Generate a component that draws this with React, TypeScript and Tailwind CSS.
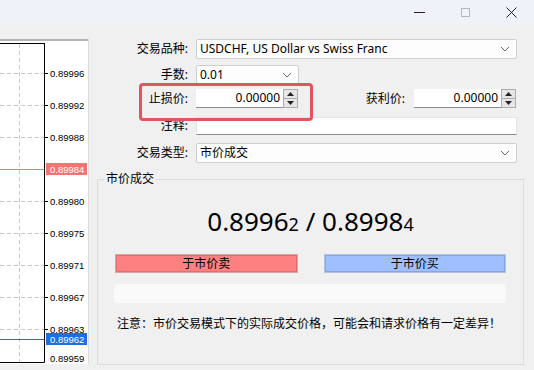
import React from "react";

const ui = "font-['Noto_Sans','Noto_Sans_CJK_SC',sans-serif]";

const gridRows = [
  { y: 34, label: "0.89996" },
  { y: 66, label: "0.89992" },
  { y: 98, label: "0.89988" },
  { y: 162, label: "0.89980" },
  { y: 194, label: "0.89975" },
  { y: 226, label: "0.89971" },
  { y: 258, label: "0.89967" },
  { y: 290, label: "0.89963" },
];

function Chevron() {
  return (
    <svg width="10" height="6" viewBox="0 0 10 6" className="shrink-0">
      <path d="M1 1 L5 5 L9 1" fill="none" stroke="#6b6b6b" strokeWidth="1" />
    </svg>
  );
}

function Select({ value, className }: { value: string; className: string }) {
  return (
    <div
      className={`flex h-[20px] items-center justify-between rounded-[2px] border border-[#cfcfcf] bg-[#fdfdfd] pl-[3px] pr-[6px] text-[12px] text-black ${className}`}
    >
      <span className="leading-none">{value}</span>
      <Chevron />
    </div>
  );
}

function Spinner({ value }: { value: string }) {
  return (
    <div className="flex h-[19px]">
      <div className="flex w-[87px] items-center justify-end border-b border-[#8c8c8c] bg-white pr-[3px] text-[12px] leading-none text-black">
        {value}
      </div>
      <div className="flex w-[15px] flex-col border border-[#acacac] bg-[#e6e6e6]">
        <div className="flex flex-1 items-center justify-center border-b border-[#acacac]">
          <svg width="7" height="4" viewBox="0 0 7 4">
            <path d="M0 4 L3.5 0 L7 4 Z" fill="#222" />
          </svg>
        </div>
        <div className="flex flex-1 items-center justify-center">
          <svg width="7" height="4" viewBox="0 0 7 4">
            <path d="M0 0 L3.5 4 L7 0 Z" fill="#222" />
          </svg>
        </div>
      </div>
    </div>
  );
}

function Chart() {
  return (
    <svg width="89" height="325" viewBox="0 0 89 325" className="block">
      <rect x="0" y="0" width="88" height="325" fill="#ffffff" />
      <line x1="0" y1="1" x2="88" y2="1" stroke="#b4b4b4" strokeWidth="2" />
      <line x1="88.5" y1="0" x2="88.5" y2="325" stroke="#dcdcdc" />
      <line x1="19.5" y1="5" x2="19.5" y2="323" stroke="#c8c8c8" strokeDasharray="4 3" />
      {gridRows.map((r) => (
        <g key={r.label}>
          <line x1="0" y1={r.y + 0.5} x2="44" y2={r.y + 0.5} stroke="#c8c8c8" strokeDasharray="4 3" />
          <line x1="44" y1={r.y + 0.5} x2="48" y2={r.y + 0.5} stroke="#000" />
          <text x="50" y={r.y + 3.5} fontSize="9.5" fontFamily="Liberation Sans, sans-serif" fill="#000">
            {r.label}
          </text>
        </g>
      ))}
      <line x1="0" y1="130.5" x2="44" y2="130.5" stroke="#f07878" />
      <rect x="46" y="124" width="41" height="12" fill="#f47474" />
      <text x="50" y="133.5" fontSize="9.5" fontFamily="Liberation Sans, sans-serif" fill="#fff">
        0.89984
      </text>
      <line x1="0" y1="300.5" x2="44" y2="300.5" stroke="#2b6cb8" />
      <rect x="46" y="294" width="41" height="12" fill="#1c6fe3" />
      <text x="50" y="303.5" fontSize="9.5" fontFamily="Liberation Sans, sans-serif" fill="#fff">
        0.89962
      </text>
      <text x="50" y="322.5" fontSize="9.5" fontFamily="Liberation Sans, sans-serif" fill="#000">
        0.89959
      </text>
      <line x1="0" y1="4.5" x2="44.5" y2="4.5" stroke="#000" />
      <line x1="44.5" y1="4" x2="44.5" y2="323.5" stroke="#000" />
      <line x1="0" y1="323.5" x2="44.5" y2="323.5" stroke="#000" />
    </svg>
  );
}

export default function App() {
  return (
    <div className={`relative h-[370px] w-[534px] overflow-hidden bg-[#f0f0f0] text-black ${ui}`}>
      {/* title bar */}
      <div className="flex h-[25px] items-center justify-end bg-[#eff2f8]">
        <div className="flex w-[46px] items-center justify-center">
          <div className="h-px w-[11px] bg-[#222]" />
        </div>
        <div className="flex w-[46px] items-center justify-center">
          <div className="h-[9px] w-[9px] border border-[#b8b8b8]" />
        </div>
        <div className="flex w-[46px] items-center justify-center">
          <svg width="11" height="11" viewBox="0 0 11 11">
            <path d="M0.5 0.5 L10.5 10.5 M10.5 0.5 L0.5 10.5" stroke="#222" strokeWidth="1" />
          </svg>
        </div>
      </div>

      <div className="flex">
        <div className="mt-[14px] shrink-0">
          <Chart />
        </div>

        <div className="flex-1 pl-[8px] pr-[10px]">
          <div className="pr-[7px]">
            <div className="mt-[14px] flex items-center">
              <span className="w-[91px] text-right text-[12px]">交易品种:</span>
              <Select value="USDCHF, US Dollar vs Swiss Franc" className="ml-[8px] flex-1" />
            </div>
            <div className="mt-[6px] flex items-center">
              <span className="w-[91px] text-right text-[12px]">手数:</span>
              <Select value="0.01" className="ml-[8px] w-[103px]" />
            </div>
            <div className="mt-[4px] flex items-center">
              <span className="w-[91px] text-right text-[12px]">止损价:</span>
              <div className="ml-[8px]">
                <Spinner value="0.00000" />
              </div>
              <span className="ml-auto text-[12px]">获利价:</span>
              <div className="ml-[9px] mr-px">
                <Spinner value="0.00000" />
              </div>
            </div>
            <div className="mt-[9px] flex items-center">
              <span className="w-[91px] text-right text-[12px]">注释:</span>
              <div className="ml-[8px] h-[18px] flex-1 border border-b-[#8c8c8c] border-[#e3e3e3] bg-white" />
            </div>
            <div className="mt-[8px] flex items-center">
              <span className="w-[91px] text-right text-[12px]">交易类型:</span>
              <Select value="市价成交" className="ml-[8px] flex-1" />
            </div>
          </div>

          {/* group box */}
          <div className="relative mt-[16px] h-[186px] border border-[#dcdcdc] px-[17px]">
            <span className="absolute left-[7px] top-[-9px] bg-[#f0f0f0] px-px text-[12px] leading-[16px]">
              市价成交
            </span>
            <div className="mt-[26px] flex h-[30px] items-center justify-center text-[26px] leading-none">
              <span className="leading-none">
                0.8996<span className="text-[18px] leading-none">2</span> / 0.8998
                <span className="text-[18px] leading-none">4</span>
              </span>
            </div>
            <div className="mt-[18px] flex gap-[26px]">
              <button className="flex h-[19px] flex-1 items-center justify-center border border-[#d9a6a6] bg-[#ff8080] text-[12px] leading-none shadow-[inset_0_0_0_1px_#e07070]">
                于市价卖
              </button>
              <button className="flex h-[19px] flex-1 items-center justify-center border border-[#b4c4dc] bg-[#9fbfff] text-[12px] leading-none shadow-[inset_0_0_0_1px_#86a6e6]">
                于市价买
              </button>
            </div>
            <div className="ml-[-1px] mt-[11px] h-[19px] rounded-[3px] bg-[#f9f9f9]" />
            <p className="mt-[13px] pl-[2px] text-[12px] leading-[16px]">
              注意：市价交易模式下的实际成交价格，可能会和请求价格有一定差异！
            </p>
          </div>
        </div>
      </div>

      {/* highlight on the stop-loss row */}
      <div className="pointer-events-none absolute left-[139px] top-[83px] h-[38px] w-[174px] rounded-[4px] border-[3px] border-[#e5545c]" />
    </div>
  );
}
